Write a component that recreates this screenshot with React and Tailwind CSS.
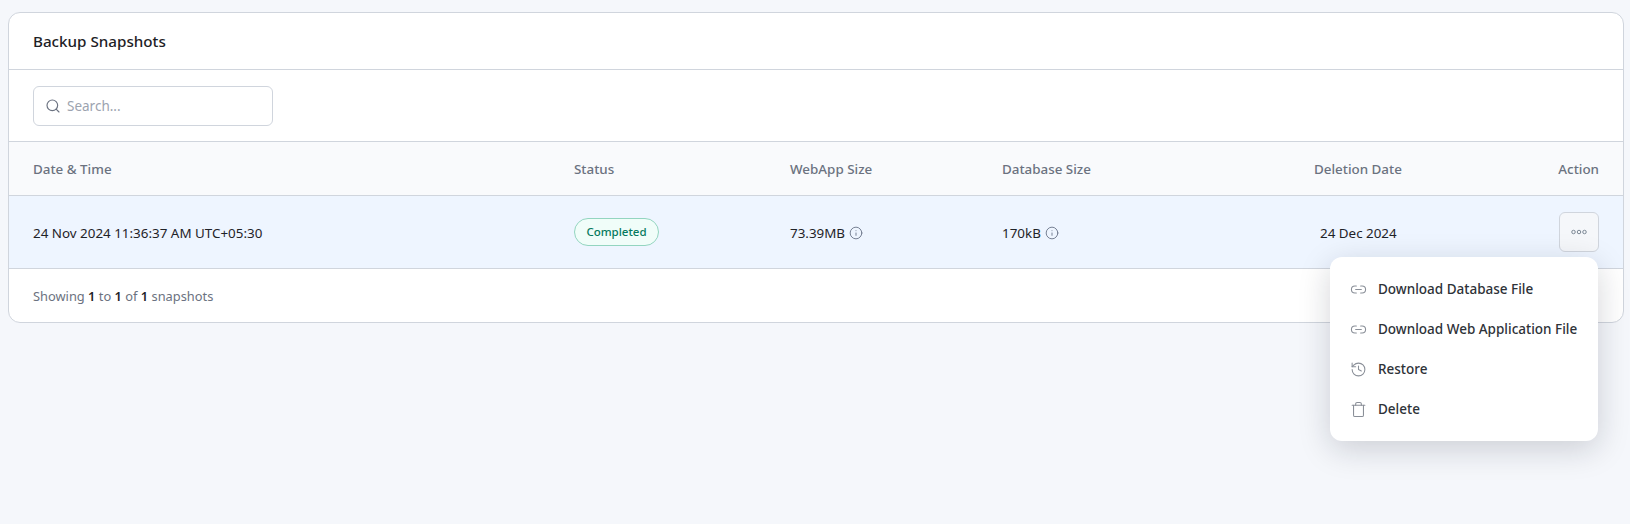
import React from "react";
import { Search, Info, Link2, History, Trash } from "lucide-react";

const menuItems = [
  { label: "Download Database File", Icon: Link2, size: 17 },
  { label: "Download Web Application File", Icon: Link2, size: 17 },
  { label: "Restore", Icon: History, size: 17 },
  { label: "Delete", Icon: Trash, size: 17 },
];

const cols = "grid grid-cols-[541px_216px_212px_312px_1fr] items-center pl-6 pr-6";

const App = () => {
  return (
    <div className="min-h-[524px] bg-[#f5f7fb] px-2 pt-3 font-['Noto_Sans',sans-serif] text-[#1f2328]">
      <div className="relative w-[1616px] rounded-xl border border-[#d0d5dd] bg-white">
        <div className="flex h-[57px] items-center border-b border-[#d0d5dd] px-6 pt-px">
          <h1 className="text-[15.2px] font-medium text-[#1d2125]">Backup Snapshots</h1>
        </div>

        <div className="border-b border-[#d0d5dd] px-6 pt-4 pb-[15px]">
          <div className="flex h-10 w-[240px] items-center gap-1.5 rounded-md border border-[#d0d5dd] px-[11px]">
            <Search size={16} strokeWidth={1.75} className="text-[#6b7280]" />
            <span className="text-[13.5px] text-[#9ca3af]">Search...</span>
          </div>
        </div>

        <div className={`${cols} h-[54px] border-b border-[#d0d5dd] bg-[#f9fafc] pt-0.5 text-[13.4px] font-medium text-[#6b7280]`}>
          <div>Date &amp; Time</div>
          <div>Status</div>
          <div>WebApp Size</div>
          <div>Database Size</div>
          <div className="flex justify-between">
            <span>Deletion Date</span>
            <span>Action</span>
          </div>
        </div>

        <div className={`${cols} h-[73px] border-b border-[#d0d5dd] bg-[#eef5ff] text-[13.4px]`}>
          <div className="pt-0.5">24 Nov 2024 11:36:37 AM UTC+05:30</div>
          <div>
            <span className="inline-flex h-[28px] w-[85px] items-center justify-center rounded-full border border-[#93d5c0] bg-[#f0fdf9] text-[11.5px] font-medium text-[#067a5e]">
              Completed
            </span>
          </div>
          <div className="flex items-center gap-1 pt-0.5">
            73.39MB <Info size={14} strokeWidth={1.5} className="text-[#667085]" />
          </div>
          <div className="flex items-center gap-1 pt-0.5">
            170kB <Info size={14} strokeWidth={1.5} className="text-[#667085]" />
          </div>
          <div className="flex items-center justify-between pl-1.5">
            <span className="pt-0.5">24 Dec 2024</span>
            <button className="flex h-10 w-10 items-center justify-center rounded-md border border-[#d0d5dd] bg-[#f5f7fa]">
              <svg width="16" height="6" viewBox="0 0 16 6" fill="none" stroke="#7b8794" strokeWidth="1">
                <circle cx="2.5" cy="3" r="1.75" />
                <circle cx="8" cy="3" r="1.75" />
                <circle cx="13.5" cy="3" r="1.75" />
              </svg>
            </button>
          </div>
        </div>

        <div className="flex h-[53px] items-center px-6 pt-0.5 text-[12.85px] text-[#6b7280]">
          <span>
            Showing <b className="font-semibold text-[#1f2328]">1</b> to{" "}
            <b className="font-semibold text-[#1f2328]">1</b> of{" "}
            <b className="font-semibold text-[#1f2328]">1</b> snapshots
          </span>
        </div>

        <div className="absolute top-[244px] left-[1321px] w-[268px] rounded-xl bg-white py-3 shadow-[0_8px_32px_rgba(16,24,40,0.18)]">
          {menuItems.map(({ label, Icon, size }) => (
            <div key={label} className="flex h-10 items-center gap-[11px] pl-5 text-[13.5px] font-medium text-[#2e3238]">
              <Icon size={size} strokeWidth={1.5} className="text-[#8a8f98]" />
              <span>{label}</span>
            </div>
          ))}
        </div>
      </div>
    </div>
  );
};

export default App;
